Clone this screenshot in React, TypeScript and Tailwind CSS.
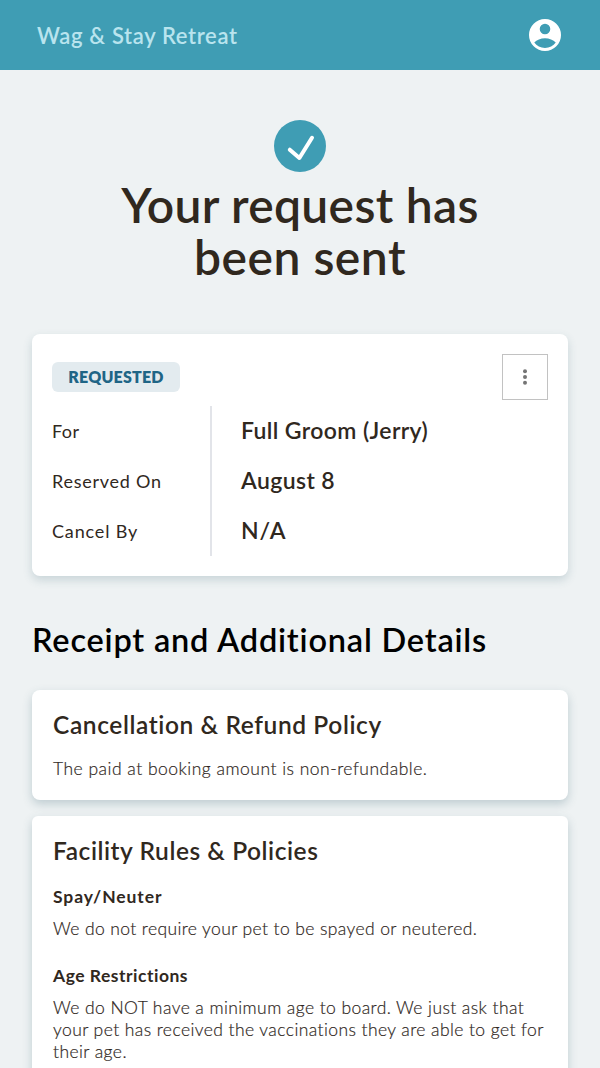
const DETAILS = [
  { label: "For", value: "Full Groom (Jerry)", labelClass: "tracking-[0.4px]", valueClass: "tracking-[0.38px]" },
  { label: "Reserved On", value: "August 8", labelClass: "tracking-[0.75px]", valueClass: "tracking-[0.4px]" },
  { label: "Cancel By", value: "N/A", labelClass: "tracking-[0.85px]", valueClass: "tracking-[0.9px]" },
];

export default function App() {
  return (
    <div className="h-[1068px] overflow-hidden bg-[#eef2f3] font-['Lato',sans-serif] text-[#30281e]">
      {/* Top bar */}
      <header className="flex h-[70px] items-center justify-between bg-[#3f9db4] pr-9 pl-[37px]">
        <span className="text-[22px] font-semibold tracking-[0.65px] whitespace-nowrap text-[#b9e4ee]">
          Wag &amp; Stay Retreat
        </span>
        <AccountIcon />
      </header>

      <main className="px-8">
        <div className="flex flex-col items-center pt-[50px]">
          <CheckBadge />
          <h1 className="mt-[7px] text-center text-[48px] leading-[52px] font-semibold whitespace-nowrap">
            <span className="block tracking-[0.3px]">Your request has</span>
            <span className="block tracking-[0.5px]">been sent</span>
          </h1>
        </div>

        {/* Reservation */}
        <section className="mt-[51px] h-[242px] rounded-lg bg-white p-5 shadow-[0_4px_10px_rgba(50,95,110,0.2)]">
          <div className="flex items-center justify-between">
            <span className="flex h-[30px] w-32 items-center justify-center rounded-md bg-[#e3ebef] text-base font-extrabold tracking-[0.2px] text-[#1f6586]">
              REQUESTED
            </span>
            <button className="flex size-[46px] items-center justify-center border border-[#c2c2c2]">
              <DotsIcon />
            </button>
          </div>
          <div className="mt-1.5 flex">
            <div className="w-40 border-r-2 border-[#e2e4e9]">
              {DETAILS.map((d) => (
                <div key={d.label} className={`flex h-[50px] items-center text-lg whitespace-nowrap ${d.labelClass}`}>
                  {d.label}
                </div>
              ))}
            </div>
            <div className="pl-[29px]">
              {DETAILS.map((d) => (
                <div key={d.label} className={`flex h-[50px] items-center pb-0.5 text-[23px] font-semibold whitespace-nowrap ${d.valueClass}`}>
                  {d.value}
                </div>
              ))}
            </div>
          </div>
        </section>

        <h2 className="mt-11 text-[32.5px] leading-10 font-semibold tracking-[0.8px] whitespace-nowrap text-black">
          Receipt and Additional Details
        </h2>

        <section className="mt-[30px] h-[110px] rounded-lg bg-white px-[21px] pt-[19px] shadow-[0_4px_10px_rgba(50,95,110,0.25)]">
          <h3 className="text-[24.5px] leading-8 font-semibold tracking-[0.6px] whitespace-nowrap">Cancellation &amp; Refund Policy</h3>
          <p className="mt-[17px] text-[17.5px] leading-[22px] font-light tracking-[0.49px] whitespace-nowrap [-webkit-text-stroke:0.2px]">
            The paid at booking amount is non-refundable.
          </p>
        </section>

        <section className="mt-4 h-[300px] rounded-md bg-white px-[21px] pt-[19px] shadow-[0_4px_10px_rgba(50,95,110,0.25)]">
          <h3 className="text-[24.5px] leading-8 font-semibold tracking-[0.55px] whitespace-nowrap">Facility Rules &amp; Policies</h3>
          <h4 className="mt-[19px] text-[17.5px] leading-[22px] font-bold tracking-[0.9px]">Spay/Neuter</h4>
          <p className="mt-[10px] text-[17.5px] leading-[22px] font-light tracking-[0.39px] whitespace-nowrap [-webkit-text-stroke:0.2px]">
            We do not require your pet to be spayed or neutered.
          </p>
          <h4 className="mt-[25px] text-[17.5px] leading-[22px] font-bold tracking-[0.5px]">Age Restrictions</h4>
          <p className="mt-[10px] text-[17.5px] leading-[22px] font-light tracking-[0.42px] whitespace-nowrap [-webkit-text-stroke:0.2px]">
            <span className="block">We do NOT have a minimum age to board. We just ask that</span>
            <span className="block">your pet has received the vaccinations they are able to get for</span>
            <span className="block">their age.</span>
          </p>
        </section>
      </main>
    </div>
  );
}

function AccountIcon() {
  return (
    <svg viewBox="2 2 20 20" className="mr-[3px] size-8" fill="white">
      <path d="M12 2a10 10 0 1 0 0 20 10 10 0 0 0 0-20zm0 2.900a3.300 3.300 0 1 1 0 6.600 3.300 3.300 0 0 1 0-6.600zm0 15.200c-2.800 0-5.200-1.300-6.700-3.400 1.500-1.700 4-2.700 6.700-2.700s5.200 1 6.700 2.700c-1.500 2.100-3.900 3.400-6.700 3.400z" />
    </svg>
  );
}

function CheckBadge() {
  return (
    <svg viewBox="0 0 52 52" className="size-[52px]">
      <circle cx="26" cy="26" r="26" fill="#3f9db4" />
      <path d="M15.800 29.700 25.400 38 38 17.800" fill="none" stroke="white" strokeWidth="4" strokeLinecap="round" strokeLinejoin="round" />
    </svg>
  );
}

function DotsIcon() {
  return (
    <svg viewBox="0 0 16 16" className="size-4" fill="#757575">
      <circle cx="8" cy="2.200" r="2" />
      <circle cx="8" cy="8" r="2" />
      <circle cx="8" cy="13.800" r="2" />
    </svg>
  );
}
